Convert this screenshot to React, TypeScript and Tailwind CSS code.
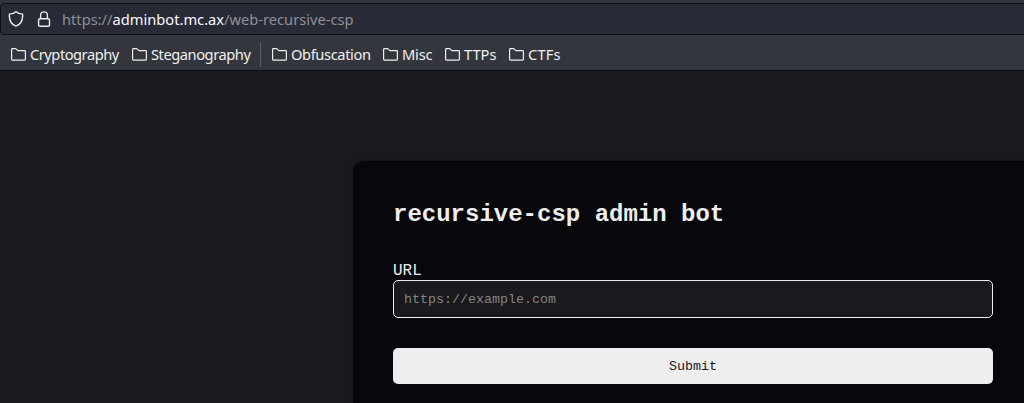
import React from "react";

function Folder() {
  return (
    <svg className="h-4 w-4 shrink-0" viewBox="0 0 16 16" fill="none" stroke="#f0f0f0" strokeWidth="1.2" strokeLinejoin="round">
      <path d="M.6 12.3V2.4Q.6 1.6 1.4 1.6H4.7L6.9 3.6H13.6Q14.4 3.6 14.4 4.4V12.3Q14.4 13.1 13.6 13.1H1.4Q.6 13.1 .6 12.3Z" />
    </svg>
  );
}

function Bookmark({ label, className }: { label: string; className: string }) {
  return (
    <div className={`flex shrink-0 items-center gap-[3px] ${className}`}>
      <Folder />
      <span className="pb-[2px] whitespace-nowrap">{label}</span>
    </div>
  );
}

export default function App() {
  return (
    <div className="flex h-[403px] w-full flex-col overflow-hidden bg-[#1a191d]">
      <header className="h-[71px] shrink-0 border-b border-[#0d0e12] bg-[#33363d] pt-[3px] font-['Noto_Sans',sans-serif] text-[14.67px] text-[#f0f0f0]">
        <div className="-mr-2 flex h-8 items-center rounded-[4px] border border-[#0d0e12] bg-[#282a36] pl-[7px]">
          <svg className="h-4 w-4 shrink-0" viewBox="0 0 16 16" fill="none" stroke="#ececec" strokeWidth="1.4" strokeLinejoin="round">
            <path d="M8 .8C6.5 2.2 4 2.9 1.4 3.1C1 8.5 3 13.2 8 15.2C13 13.2 15 8.5 14.6 3.1C12 2.9 9.5 2.2 8 .8Z" />
          </svg>
          <svg className="ml-3 h-4 w-4 shrink-0" viewBox="0 0 16 16" fill="none" stroke="#ececec" strokeWidth="1.4">
            <rect x="2.6" y="7.7" width="10.9" height="7.5" rx="1.3" />
            <path d="M4.6 7.7V4.3a3.4 3.4 0 0 1 6.8 0v3.4" />
          </svg>
          <div className="ml-[10px] whitespace-nowrap text-[#8f9098]">
            https://<span className="text-[#fbfbfe]">adminbot.mc.ax</span>/web-recursive-csp
          </div>
        </div>
        <nav className="flex h-[35px] items-center pt-1 pl-[11px]">
          <Bookmark label="Cryptography" className="w-[121px] tracking-[-0.48px]" />
          <Bookmark label="Steganography" className="w-[128px] tracking-[-0.45px]" />
          <div className="mr-[11px] h-[25px] w-px shrink-0 bg-[#5a5c63]" />
          <Bookmark label="Obfuscation" className="w-[111px] tracking-[-0.38px]" />
          <Bookmark label="Misc" className="w-[62px] tracking-[-0.2px]" />
          <Bookmark label="TTPs" className="w-[64px]" />
          <Bookmark label="CTFs" className="w-[64px] tracking-[0.2px]" />
        </nav>
      </header>
      <main className="mt-[90px] ml-[353px] h-[282px] w-[680px] shrink-0 rounded-[10px] bg-[#08070b] p-10 font-['Liberation_Mono',monospace] text-[#eeeeee] shadow-[0_0_10px_rgba(0,0,0,0.2)]">
        <h1 className="text-2xl leading-[27px] font-bold">recursive-csp admin bot</h1>
        <form className="mt-[34px] flex flex-col" onSubmit={(e) => e.preventDefault()}>
          <label htmlFor="url" className="h-[18px] text-base leading-[18px]">URL</label>
          <input
            id="url"
            placeholder="https://example.com"
            className="h-[38px] w-[600px] rounded-[5px] border border-[#eeeeee] bg-[#1a191d] px-[10px] text-[13.333px] text-[#eeeeee] outline-none placeholder:text-[#858585]"
          />
          <button className="mt-[30px] h-9 w-[600px] rounded-[5px] bg-[#eeeeee] pt-[2px] text-[13.333px] text-[#1a191d]">Submit</button>
        </form>
      </main>
    </div>
  );
}
